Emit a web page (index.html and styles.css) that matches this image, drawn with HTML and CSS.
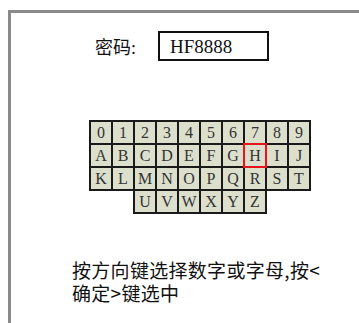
FILE: index.html
```html
<!DOCTYPE html>
<html lang="zh-CN">
<head>
    <meta charset="UTF-8">
    <title>密码输入</title>
    <link rel="stylesheet" href="styles.css">
</head>
<body>

<div class="frame">
    <div class="pwd-row">
        <span class="pwd-label">密码:</span>
        <div class="pwd-box">HF8888</div>
    </div>

    <div class="keyboard">
        <div class="key">0</div><div class="key">1</div><div class="key">2</div><div class="key">3</div><div class="key">4</div>
        <div class="key">5</div><div class="key">6</div><div class="key">7</div><div class="key">8</div><div class="key">9</div>
        <div class="key">A</div><div class="key">B</div><div class="key">C</div><div class="key">D</div><div class="key">E</div>
        <div class="key">F</div><div class="key">G</div><div class="key selected">H</div><div class="key">I</div><div class="key">J</div>
        <div class="key">K</div><div class="key">L</div><div class="key">M</div><div class="key">N</div><div class="key">O</div>
        <div class="key">P</div><div class="key">Q</div><div class="key">R</div><div class="key">S</div><div class="key">T</div>
        <div class="key first-u">U</div><div class="key">V</div><div class="key">W</div><div class="key">X</div><div class="key">Y</div>
        <div class="key">Z</div>
    </div>

    <p class="hint">按方向键选择数字或字母,按&lt;<br>确定&gt;键选中</p>
</div>

</body>
</html>
```

FILE: styles.css
```css
body {
    margin: 0;
    padding: 0;
    background-color: #fff;
    font-family: "Liberation Serif", "Noto Sans CJK SC", serif;
    color: #111;
    overflow: hidden;
}

.frame {
    margin: 10px 0 0 8px;
    height: 313px;
    border-top: 3px solid #8a8a8a;
    border-left: 3px solid #8a8a8a;
}

.pwd-row {
    display: flex;
    align-items: center;
    padding: 18px 0 0 84px;
}

.pwd-label {
    font-size: 18px;
    width: 63px;
}

.pwd-box {
    width: 97px;
    height: 26px;
    border: 2px solid #111;
    padding-left: 10px;
    font-size: 19px;
    line-height: 27px;
}

.keyboard {
    display: grid;
    grid-template-columns: repeat(10, 20px);
    grid-auto-rows: 21px;
    gap: 2px;
    padding: 2px;
    width: max-content;
    margin: 59px 0 0 78px;
}

.key {
    background-color: #dcdfcc;
    outline: 2px solid #1a1a1a;
    text-align: center;
    font-size: 16px;
    line-height: 21px;
    color: #333;
}

.key.first-u {
    grid-column-start: 3;
}

.key.selected {
    position: relative;
    z-index: 1;
    outline-color: #e8141b;
}

.hint {
    margin: 44px 0 0 61px;
    font-family: "Noto Sans CJK SC", sans-serif;
    font-size: 19px;
    line-height: 23px;
    letter-spacing: 0.3px;
    color: #111;
}
```
